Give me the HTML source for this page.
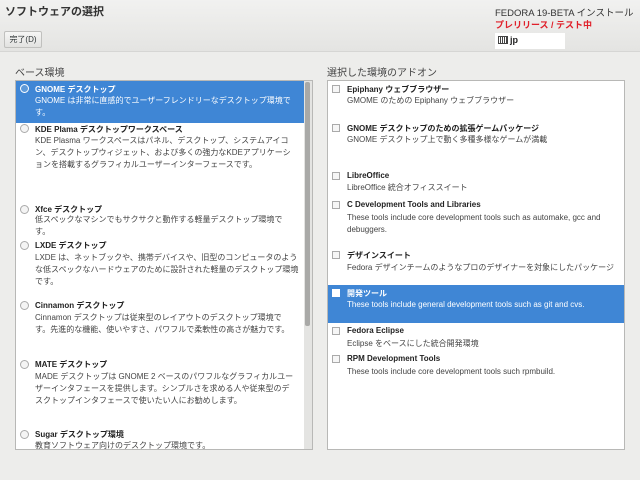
<!DOCTYPE html>
<html><head><meta charset="utf-8"><style>
*{margin:0;padding:0;box-sizing:border-box}
body{width:640px;height:480px;overflow:hidden;background:#ededeb;font-family:"Liberation Sans","Noto Sans CJK JP",sans-serif;color:#2e3436;position:relative}
.hdr{position:absolute;left:0;top:0;width:640px;height:52px;background:linear-gradient(#f1f1f0,#e4e4e2);border-bottom:1px solid #d6d6d4}
.a{position:absolute;white-space:nowrap}
.box{position:absolute;background:#fff;border:1px solid #b8b8b6}
.t{position:absolute;font-size:8px;font-weight:bold;color:#222;white-space:nowrap}
.d{position:absolute;font-size:8px;color:#444;line-height:12px;white-space:nowrap}
.sel{position:absolute;background:#3f86d5}
.sel .t,.sel .d{color:#fff}
.r{position:absolute;width:9px;height:9px;border:1px solid #aaa;border-radius:50%;background:#f4f4f4}
.c{position:absolute;width:8px;height:8px;border:1px solid #aaa;background:#f6f6f6}
</style></head><body>
<div class="hdr"></div>
<div class="a" style="left:5px;top:3px;font-size:11px;font-weight:bold;color:#333">ソフトウェアの選択</div>
<div class="a" style="left:4px;top:31px;width:38px;height:17px;border:1px solid #c0c0be;border-radius:2px;background:linear-gradient(#f6f6f5,#e2e2e0);font-size:8px;line-height:15px;text-align:center">完了(D)</div>
<div class="a" style="left:495px;top:5px;font-size:9.5px;color:#333">FEDORA 19-BETA インストール</div>
<div class="a" style="left:495px;top:18px;font-size:9px;font-weight:bold;color:#e0202a">プレリリース / テスト中</div>
<div class="a" style="left:495px;top:33px;width:70px;height:16px;background:#fff"></div>
<div class="a" style="left:498px;top:36px;width:10px;height:8px;border:1px solid #444;background:repeating-linear-gradient(90deg,#fff 0 1px,#444 1px 2px)"></div>
<div class="a" style="left:510px;top:35px;font-size:9px;font-weight:bold;color:#222">jp</div>

<div class="a" style="left:15px;top:64px;font-size:10px;color:#444">ベース環境</div>
<div class="a" style="left:327px;top:64px;font-size:10px;color:#444">選択した環境のアドオン</div>

<div class="box" style="left:15px;top:80px;width:298px;height:370px"></div>
<div class="sel" style="left:16px;top:81px;width:288px;height:42px"></div>
<div class="a" style="left:304px;top:81px;width:8px;height:368px;background:#e4e4e2"></div>
<div class="a" style="left:305px;top:82px;width:5px;height:244px;background:#a9a9a7;border-radius:2px"></div>

<div class="r" style="left:20px;top:84px;border-color:#fff;background:#5f9ad9"></div>
<div class="t" style="left:35px;top:84px;color:#fff">GNOME デスクトップ</div>
<div class="d" style="left:35px;top:95px;color:#fff">GNOME は非常に直感的でユーザーフレンドリーなデスクトップ環境で<br>す。</div>

<div class="r" style="left:20px;top:124px"></div>
<div class="t" style="left:35px;top:124px">KDE Plama デスクトップワークスペース</div>
<div class="d" style="left:35px;top:135px">KDE Plasma ワークスペースはパネル、デスクトップ、システムアイコ<br>ン、デスクトップウィジェット、および多くの強力なKDEアプリケーシ<br>ョンを搭載するグラフィカルユーザーインターフェースです。</div>

<div class="r" style="left:20px;top:205px"></div>
<div class="t" style="left:35px;top:204px">Xfce デスクトップ</div>
<div class="d" style="left:35px;top:214px">低スペックなマシンでもサクサクと動作する軽量デスクトップ環境で<br>す。</div>

<div class="r" style="left:20px;top:241px"></div>
<div class="t" style="left:35px;top:240px">LXDE デスクトップ</div>
<div class="d" style="left:35px;top:252px">LXDE は、ネットブックや、携帯デバイスや、旧型のコンピュータのよう<br>な低スペックなハードウェアのために設計された軽量のデスクトップ環境<br>です。</div>

<div class="r" style="left:20px;top:301px"></div>
<div class="t" style="left:35px;top:300px">Cinnamon デスクトップ</div>
<div class="d" style="left:35px;top:312px">Cinnamon デスクトップは従来型のレイアウトのデスクトップ環境で<br>す。先進的な機能、使いやすさ、パワフルで柔軟性の高さが魅力です。</div>

<div class="r" style="left:20px;top:360px"></div>
<div class="t" style="left:35px;top:359px">MATE デスクトップ</div>
<div class="d" style="left:35px;top:371px">MADE デスクトップは GNOME 2 ベースのパワフルなグラフィカルユー<br>ザーインタフェースを提供します。シンプルさを求める人や従来型のデ<br>スクトップインタフェースで使いたい人にお勧めします。</div>

<div class="r" style="left:20px;top:430px"></div>
<div class="t" style="left:35px;top:429px">Sugar デスクトップ環境</div>
<div class="d" style="left:35px;top:440px">教育ソフトウェア向けのデスクトップ環境です。</div>

<div class="box" style="left:327px;top:80px;width:298px;height:370px"></div>
<div class="sel" style="left:328px;top:285px;width:296px;height:38px"></div>

<div class="c" style="left:332px;top:85px"></div>
<div class="t" style="left:347px;top:84px">Epiphany ウェブブラウザー</div>
<div class="d" style="left:347px;top:95px">GMOME のための Epiphany ウェブブラウザー</div>

<div class="c" style="left:332px;top:124px"></div>
<div class="t" style="left:347px;top:123px">GNOME デスクトップのための拡張ゲームパッケージ</div>
<div class="d" style="left:347px;top:134px">GNOME デスクトップ上で動く多種多様なゲームが満載</div>

<div class="c" style="left:332px;top:172px"></div>
<div class="t" style="left:347px;top:171px">LibreOffice</div>
<div class="d" style="left:347px;top:182px">LibreOffice 統合オフィススイート</div>

<div class="c" style="left:332px;top:201px"></div>
<div class="t" style="left:347px;top:200px">C Development Tools and Libraries</div>
<div class="d" style="left:347px;top:212px">These tools include core development tools such as automake, gcc and<br>debuggers.</div>

<div class="c" style="left:332px;top:251px"></div>
<div class="t" style="left:347px;top:250px">デザインスイート</div>
<div class="d" style="left:347px;top:262px">Fedora デザインチームのようなプロのデザイナーを対象にしたパッケージ</div>

<div class="c" style="left:332px;top:289px;border-color:#fff;background:#fff"></div>
<div class="t" style="left:347px;top:288px;color:#fff">開発ツール</div>
<div class="d" style="left:347px;top:299px;color:#fff">These tools include general development tools such as git and cvs.</div>

<div class="c" style="left:332px;top:327px"></div>
<div class="t" style="left:347px;top:326px">Fedora Eclipse</div>
<div class="d" style="left:347px;top:338px">Eclipse をベースにした統合開発環境</div>

<div class="c" style="left:332px;top:355px"></div>
<div class="t" style="left:347px;top:354px">RPM Development Tools</div>
<div class="d" style="left:347px;top:366px">These tools include core development tools such rpmbuild.</div>
</body></html>
